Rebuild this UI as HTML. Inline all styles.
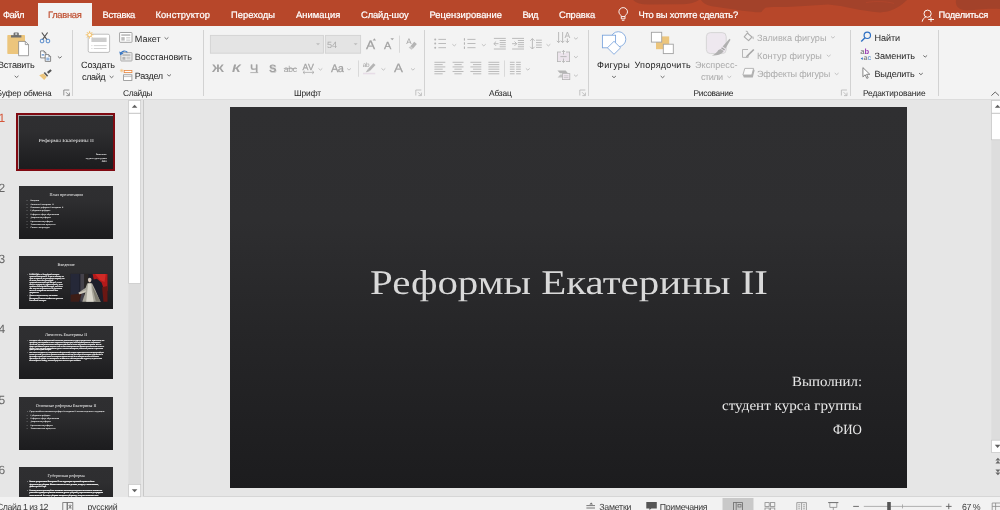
<!DOCTYPE html>
<html lang="ru"><head><meta charset="utf-8"><title>Реформы Екатерины II - PowerPoint</title>
<style>
html,body{margin:0;padding:0}
body{text-rendering:geometricPrecision;width:1000px;height:510px;overflow:hidden;position:relative;background:#e6e6e6;font-family:"Liberation Sans",sans-serif;color:#262626}
.a{position:absolute}
.t{position:absolute;white-space:nowrap;line-height:1;font-family:"Liberation Sans",sans-serif;color:#262626}
.sf{font-family:"Liberation Serif",serif}
#title{left:0;top:0;width:1000px;height:26.4px;background:#b7472a;overflow:hidden}
#tab{left:38px;top:2.7px;width:53.5px;height:24px;background:#f3f3f3}
#ribbon{left:0;top:26.4px;width:1000px;height:72.8px;background:#f3f3f3;box-shadow:0 0.5px 0.6px #dcdcdc}
.gs{position:absolute;top:30px;width:1px;height:66px;background:#d2d2d2}
#panel{left:0;top:100px;width:143px;height:397px;background:#e6e6e6;border-right:1px solid #c8c8c8;overflow:hidden}
#slide{left:230px;top:107px;width:677px;height:380.5px;background:#2b2b2d;background-image:linear-gradient(to bottom,#2f2f31 0%,#2e2e30 30%,#252527 62%,#1c1c1e 100%)}
#status{left:0;top:497.2px;width:1000px;height:14px;background:#f2f2f2}
.sbtn{position:absolute;background:#fff;border:1px solid #d0d0d0;box-sizing:border-box}
.thumb{will-change:transform;position:absolute;left:18.5px;width:94.2px;height:53px;background:#2b2b2d;background-image:linear-gradient(to bottom,#2f2f31 0%,#2e2e30 30%,#252527 62%,#1c1c1e 100%);overflow:hidden}
.ts{position:absolute;left:0;top:0;width:677px;height:381px;transform:scale(0.13915);transform-origin:0 0;font-family:"Liberation Serif",serif;color:#fff}
.tt{position:absolute;left:0;width:677px;text-align:center;white-space:nowrap;line-height:1.24;color:#f0f0f0}
.tx{position:absolute;white-space:nowrap;line-height:1.2;font-weight:bold}
.tp{position:absolute;font-weight:bold;-webkit-text-stroke:1.1px #fff}
.tp p{margin:0 0 0 14px;text-indent:-14px}
.bl{display:inline-block;width:26px;font-size:.7em}
.bl2{display:inline-block;width:14px;text-indent:0;font-size:.7em}
svg{position:absolute;overflow:visible}
</style></head>
<body>
<div id="title" class="a"><svg style="left:0;top:0" width="1000" height="27" viewBox="0 0 1000 27"><path d="M633 0C636 3 641 4.5 648 4.5L684 4.3C690 4 695 2.5 699 0Z" fill="#a3422a"/><path d="M701 0C703 3 706 5 712 6.2C725 8.2 740 10.4 752 11.8C757 12.4 760 12.5 761.5 12C763 10 764 8.4 766 7.4C775 6.6 788 7.4 800 6.2L828 4.4C845 5.6 860 11 880 12.4C890 12 899 8 907 0Z" fill="#a3422a"/><path d="M866 2.6C876 0.8 886 1.4 894 3.4" fill="none" stroke="#b0452b" stroke-width="0.9"/><path d="M956 0C955 5 958 10 966 10.4C975 10.6 985 8 1000 9V0Z" fill="#a3422a"/></svg>
</div>
<div id="tab" class="a"></div>
<div id="ribbon" class="a"></div>
<div class="gs" style="left:72px"></div>
<div class="gs" style="left:203px"></div>
<div class="gs" style="left:424px"></div>
<div class="gs" style="left:588px"></div>
<div class="gs" style="left:850px"></div>
<div class="gs" style="left:938px"></div>
<!-- left thumbnail panel -->
<div id="panel" class="a"></div>
<div class="a" style="left:16px;top:112.6px;width:99.2px;height:58.2px;background:#800a12"></div>
<div class="a" style="left:18.1px;top:114.8px;width:95px;height:53.9px;background:#a9a9ab"></div>
<div class="thumb" style="top:115.6px"><div class="ts"><div class="tx" style="left:139.9px;top:158px;font-size:34.6px;transform:scaleX(1.183);transform-origin:0 0;color:#f0f0f0;font-weight:normal">Реформы Екатерины II</div><div class="tx" style="right:45px;top:267px;font-size:15.5px;text-align:right;line-height:24.3px">Выполнил:<br>студент курса группы<br>ФИО</div></div></div>
<div class="thumb" style="top:185.6px"><div class="ts"><div class="tt" style="top:45.8px;font-size:30.5px">План презентации</div><div class="tx" style="left:56px;top:98px;font-size:15.3px"><span class="bl">▪</span>Введение</div><div class="tx" style="left:56px;top:124px;font-size:15.3px"><span class="bl">▪</span>Личность Екатерины II</div><div class="tx" style="left:56px;top:147px;font-size:15.3px"><span class="bl">▪</span>Основные реформы Екатерины II</div><div class="tx" style="left:56px;top:170px;font-size:15.3px"><span class="bl">▪</span>Губернская реформа</div><div class="tx" style="left:56px;top:196px;font-size:15.3px"><span class="bl">▪</span>Реформа в сфере образования</div><div class="tx" style="left:56px;top:220px;font-size:15.3px"><span class="bl">▪</span>Дворянская реформа</div><div class="tx" style="left:56px;top:243px;font-size:15.3px"><span class="bl">▪</span>Крестьянская реформа</div><div class="tx" style="left:56px;top:265px;font-size:15.3px"><span class="bl">▪</span>Экономические процессы</div><div class="tx" style="left:56px;top:289px;font-size:15.3px"><span class="bl">▪</span>Список литературы</div></div></div>
<div class="thumb" style="top:256.0px"><div class="ts"><div class="tt" style="top:42.9px;font-size:30.5px">Введение</div><div class="tp" style="left:61px;top:125px;width:266px;font-size:12.6px;line-height:14.7px"><p><span class="bl2">▪</span>В 1762-1796 гг. в Российской империи правила Екатерина II. У нее не имелось ни прав на престол, ни российских корней, тем не менее, она стала достойной продолжательницей идей Петра I, и за ее заслуги в народе эту правительницу даже прозвали Екатериной Великой, хотя сама она титулов не принимала. Ее правление вошло в историю как «золотой век» дворянства.</p><p style="margin-top:7px"><span class="bl2">▪</span>Данные свидетельства, что именно Екатерина II внесла наибольшее развитие Российской империи.</p></div><svg style="left:371px;top:129px" width="265" height="199" viewBox="0 0 265 199"><rect width="265" height="199" fill="#1d1e2a"/><rect x="0" y="0" width="62" height="199" fill="#252838"/><rect x="70" y="0" width="28" height="199" fill="#45424a"/><rect x="98" y="0" width="30" height="199" fill="#2a2624"/><path d="M158 0H265V120L240 112 222 62 188 34 166 40Z" fill="#b41a1a"/><path d="M176 0H252L244 58 210 44Z" fill="#d02a26"/><path d="M226 96L265 86V199H236Z" fill="#6a1713"/><path d="M0 150L80 140 60 199H0Z" fill="#3d1d16"/><ellipse cx="137" cy="42" rx="13" ry="14" fill="#c9c5bf"/><ellipse cx="137" cy="50" rx="8.5" ry="10.5" fill="#e3c9b6"/><path d="M119 68Q137 58 155 68L176 112 214 199H84L106 132 62 146 56 136 108 100Z" fill="#a9a69b"/><path d="M126 70L148 70 152 120 166 199H112L120 120Z" fill="#d9d6cb"/><path d="M154 84L196 164 218 199H182Z" fill="#7f7c70"/><path d="M62 146L106 132 112 118 58 136Z" fill="#cfcabd"/></svg></div></div>
<div class="thumb" style="top:326.3px"><div class="ts"><div class="tt" style="top:45.1px;font-size:30.5px">Личность Екатерины II</div><div class="tp" style="left:61px;top:95px;width:556px;font-size:11.6px;line-height:13.9px"><p><span class="bl2">▪</span>Екатерина II была неоднозначной личностью: решительная, мудрая, прогрессивная. Кроме этого, она прекрасно умела оценивать своих подданных. Императрица «коллекционировала» выдающихся личностей, при избрании Великая Екатерина действовала весьма обдуманно и осторожно. Во всех сферах достижения страны только за счет таланта «екатерининских орлов» пришлись очень кстати в состав и духу, как тогда можно было судить о личности Екатерины, насколько успешно и правильно действует на службе империи.</p><p style="margin-top:2px"><span class="bl2">▪</span>Вся жизнь Екатерины II и современных ей правителей, которая перекладывалась императрицей для отзыва для всей думы, была просветительской мыслью. Во дни Петра III Екатерина упражнялась в философии преимущественно на материале просветителей, после которого ее начали называть «философом на троне». Так Екатерина II не обошлась и без «Петровской» мудрости, но достаточно было сохранить свободу, только на разумных началах права человека.</p></div></div></div>
<div class="thumb" style="top:396.7px"><div class="ts"><div class="tt" style="top:45.1px;font-size:30.5px">Основные реформы Екатерины II</div><div class="tx" style="left:60px;top:96.5px;font-size:15.3px"><span class="bl" style="width:15px">▪</span>Среди наиболее значимых реформ Екатерины II можно выделить следующие:</div><div class="tx" style="left:56px;top:123px;font-size:15.3px"><span class="bl">–</span>Губернская реформа</div><div class="tx" style="left:56px;top:146px;font-size:15.3px"><span class="bl">–</span>Реформа в сфере образования</div><div class="tx" style="left:56px;top:170px;font-size:15.3px"><span class="bl">–</span>Дворянская реформа</div><div class="tx" style="left:56px;top:196.5px;font-size:15.3px"><span class="bl">–</span>Крестьянская реформа</div><div class="tx" style="left:56px;top:218px;font-size:15.3px"><span class="bl">–</span>Экономические процессы</div></div></div>
<div class="thumb" style="top:466.9px"><div class="ts"><div class="tt" style="top:46.5px;font-size:30.5px">Губернская реформа</div><div class="tp" style="left:61px;top:98px;width:548px;font-size:13.2px;line-height:17px"><p><span class="bl2">▪</span>Вплоть до правления Екатерины II вся территория огромной страны не была оформлена на губернии. Именно она ввела новое деление, которое, с изменениями, дожило до 1917 года.</p><p style="margin-top:5px"><span class="bl2">▪</span>В основу нового деления была положена численность податного населения: отныне она равнялась примерно трёмстам тысячам душ на губернию, уезды включали до тридцати тысяч жителей. Во главе губернии находился губернатор, которого назначала сама императрица, а каждый уезд возглавлял капитан-исправник.</p></div></div></div>
<!-- main slide -->
<div id="slide" class="a"></div>
<!-- status bar -->
<div class="a" style="left:143px;top:496.2px;width:857px;height:1px;background:#d6d6d6"></div>
<div id="status" class="a"></div>
<svg class="a" style="left:0;top:0" width="1000" height="510" viewBox="0 0 1000 510">
<path d="M621.3 16.6C621.3 14.9 618.9 14.2 618.9 11.9A4.3 4.3 0 0 1 627.5 11.9C627.5 14.2 625 14.9 625 16.6Z" fill="none" stroke="#fff" stroke-width="0.95"/>
<path d="M621.3 16.6V18.8H625V16.6M621.9 20.3H624.4" fill="none" stroke="#fff" stroke-width="0.9"/>
<circle cx="927.6" cy="13.7" r="3.6" fill="none" stroke="#fff" stroke-width="0.95"/>
<path d="M922.2 21.7C922.6 19.2 924.2 17.6 925.8 17" fill="none" stroke="#fff" stroke-width="0.95"/>
<path d="M928.2 19.5H934M931 17.3V21.8" fill="none" stroke="#fff" stroke-width="0.95"/>
<rect x="7.3" y="35" width="17.7" height="19" rx="0.8" fill="#ecc57c"/>
<path d="M11 37.6V35.2H13.6V33.3Q13.6 32.4 14.5 32.4H17.9Q18.8 32.4 18.8 33.3V35.2H21.4V37.6Z" fill="#6f6f6f"/>
<rect x="15.2" y="33.4" width="2" height="1.3" fill="#f3f3f3"/>
<path d="M18.6 41.4H25.3L28.5 44.6V55.7H18.6Z" fill="#fff" stroke="#7c7c7c" stroke-width="0.7"/>
<path d="M25.3 41.4V44.6H28.5" fill="none" stroke="#7c7c7c" stroke-width="0.7"/>
<path d="M14.70 75.85L16.60 77.50L18.50 75.85" fill="none" stroke="#606060" stroke-width="0.9"/>
<path d="M41.8 32.5L46.9 39.6M47.6 32.5L42.5 39.6" stroke="#555" stroke-width="1.15" fill="none"/>
<rect x="40.4" y="39.3" width="3.3" height="3.4" rx="1.1" fill="none" stroke="#3b78c4" stroke-width="1"/><rect x="46.3" y="39.3" width="3.3" height="3.4" rx="1.1" fill="none" stroke="#3b78c4" stroke-width="1"/>
<path d="M40.6 50.9H44L45.9 52.8V57.9H40.6Z" fill="#fff" stroke="#6a6a6a" stroke-width="0.8"/>
<path d="M44 50.9V52.8H45.9" fill="none" stroke="#6a6a6a" stroke-width="0.6"/>
<path d="M45.2 54.6H48.7L50.6 56.5V61.4H45.2Z" fill="#fff" stroke="#6a6a6a" stroke-width="0.8"/>
<path d="M48.7 54.6V56.5H50.6" fill="none" stroke="#6a6a6a" stroke-width="0.6"/>
<path d="M41.7 54.9H44.2" stroke="#3b78c4" stroke-width="1.1"/><path d="M46.3 58.2H49.5M46.3 59.8H49.5" stroke="#3b78c4" stroke-width="0.8"/>
<path d="M57.90 56.45L59.80 58.10L61.70 56.45" fill="none" stroke="#606060" stroke-width="0.9"/>
<path d="M47 72.1L50.4 69.2L51.8 70.8L48.4 73.7Z" fill="#555"/>
<path d="M44.9 72L48.2 75.7L47 76.8L43.7 73.1Z" fill="#555"/>
<path d="M43.6 73.6L46.7 77L44.2 79.9L39.2 75.2Z" fill="#ecc57c"/>
<path d="M63.8 95.5V90H69.3" fill="none" stroke="#7a7a7a" stroke-width="0.8"/>
<path d="M66.0 92.2L69.1 95.3M69.39999999999999 92.6V95.6H66.39999999999999" fill="none" stroke="#7a7a7a" stroke-width="0.8"/>
<rect x="88.2" y="34.2" width="21.4" height="18.2" rx="1.6" fill="#fff" stroke="#bdbdbd" stroke-width="1"/>
<rect x="91.4" y="37.6" width="15.2" height="4.4" fill="#cdcdcd"/>
<path d="M91.4 45.6H92.4M93.8 45.6H106.6M91.4 48.5H92.4M93.8 48.5H106.6" stroke="#cdcdcd" stroke-width="0.9"/>
<g stroke="#f2bd5c" stroke-width="0.8" fill="none"><path d="M89.6 30.9V38.7M85.7 34.8H93.5M86.9 32.1L92.3 37.5M92.3 32.1L86.9 37.5"/></g><circle cx="89.6" cy="34.8" r="1.9" fill="#fffaf0" stroke="#f0b248" stroke-width="0.7"/>
<path d="M109.70 76.05L111.60 77.70L113.50 76.05" fill="none" stroke="#606060" stroke-width="0.9"/>
<rect x="119.6" y="32.5" width="12.4" height="9.8" rx="0.6" fill="#fff" stroke="#8e8e8e" stroke-width="0.8"/>
<rect x="121.3" y="34.2" width="9" height="1.7" fill="#bdbdbd"/><rect x="121.3" y="37.1" width="3.4" height="3.5" fill="#bdbdbd"/><path d="M126.2 37.5H130.3M126.2 39H130.3M126.2 40.4H130.3" stroke="#c4c4c4" stroke-width="0.7"/>
<path d="M164.60 37.45L166.50 39.10L168.40 37.45" fill="none" stroke="#606060" stroke-width="0.9"/>
<rect x="120.8" y="52.6" width="11.2" height="8.4" rx="0.5" fill="#ececec" stroke="#9a9a9a" stroke-width="0.8"/>
<rect x="122.4" y="54.3" width="8" height="1.5" fill="#b4b4b4"/><rect x="122.4" y="56.9" width="3" height="2.8" fill="#b4b4b4"/><path d="M126.6 57.3H130.4M126.6 58.8H130.4" stroke="#b4b4b4" stroke-width="0.7"/>
<path d="M127.4 52.4C125.6 50.3 122.2 50.6 120.9 53.4" fill="none" stroke="#3b78c4" stroke-width="1.2"/><path d="M119.3 51.4L120.1 55.3L123.6 53.6Z" fill="#3b78c4"/>
<rect x="124.2" y="70.4" width="7.7" height="2.2" fill="#fff" stroke="#e8853d" stroke-width="0.8"/>
<path d="M121.7 68.8V72.4M119.9 70.6H123.5M120.5 69.4L122.9 71.8M122.9 69.4L120.5 71.8" stroke="#f3c078" stroke-width="0.6"/>
<rect x="123.6" y="74.8" width="8.3" height="5.6" fill="#fff" stroke="#8e8e8e" stroke-width="0.8"/><path d="M123.6 76.6H131.9" stroke="#a9a9a9" stroke-width="0.7"/>
<path d="M167.20 74.45L169.10 76.10L171.00 74.45" fill="none" stroke="#606060" stroke-width="0.9"/>
<rect x="210.4" y="35.4" width="113" height="17.8" fill="#e4e4e4" stroke="#d2d2d2" stroke-width="0.9"/>
<rect x="325.4" y="35.4" width="35.2" height="17.8" fill="#e4e4e4" stroke="#d2d2d2" stroke-width="0.9"/>
<path d="M316 43.2H320L318 45.3Z" fill="#bdbdbd"/><path d="M353.6 43.2H357.6L355.6 45.3Z" fill="#bdbdbd"/>
<path d="M372.7 40.4L374.4 38.3L376.1 40.4Z" fill="#a4a4a4"/><path d="M390.4 38.2H394L392.2 40.3Z" fill="#a4a4a4"/>
<path d="M399.5 35.6V52.8M358.5 60.4V76.8M504.5 60.4V76.8" stroke="#d6d6d6" stroke-width="0.9"/>
<path d="M410.4 46.2L414.2 41.7L416.9 44L413.1 48.5Z" fill="#b4b4b4"/><path d="M408.7 47.4L410.4 46.2 413.1 48.5 411.4 49.7Z" fill="#c8c8c8"/>
<path d="M250.30 72.60H258.20" stroke="#ababab" stroke-width="0.9" fill="none"/>
<path d="M283.80 68.60H297.00" stroke="#ababab" stroke-width="0.8" fill="none"/>
<path d="M303 72.4H314M303 72.4L304.8 70.9M303 72.4L304.8 73.9M314 72.4L312.2 70.9M314 72.4L312.2 73.9" stroke="#ababab" stroke-width="0.8" fill="none"/>
<path d="M318.50 68.45L320.40 70.10L322.30 68.45" fill="none" stroke="#bcbcbc" stroke-width="0.9"/>
<path d="M347.10 68.45L349.00 70.10L350.90 68.45" fill="none" stroke="#bcbcbc" stroke-width="0.9"/>
<path d="M381.50 68.45L383.40 70.10L385.30 68.45" fill="none" stroke="#bcbcbc" stroke-width="0.9"/>
<path d="M411.00 68.45L412.90 70.10L414.80 68.45" fill="none" stroke="#bcbcbc" stroke-width="0.9"/>
<path d="M367.8 69.2L373.4 63.2L375.5 65.1L369.9 71.1Z" fill="#b4b4b4"/><path d="M365.6 72.6L367.8 69.2 369.9 71.1Z" fill="#b4b4b4"/>
<rect x="363" y="72.8" width="12.2" height="1.5" fill="#e7dde7"/>
<path d="M415.8 95.5V90H421.3" fill="none" stroke="#b5b5b5" stroke-width="0.8"/>
<path d="M418.0 92.2L421.1 95.3M421.40000000000003 92.6V95.6H418.40000000000003" fill="none" stroke="#b5b5b5" stroke-width="0.8"/>
<circle cx="435.2" cy="39.4" r="1" fill="#b4b4b4"/>
<path d="M438.40 39.40H446.00" stroke="#b4b4b4" stroke-width="0.9" fill="none"/>
<path d="M467.40 39.40H475.50" stroke="#b4b4b4" stroke-width="0.9" fill="none"/>
<rect x="463.9" y="38.199999999999996" width="1.1" height="2.4" fill="#b4b4b4"/>
<circle cx="435.2" cy="43.5" r="1" fill="#b4b4b4"/>
<path d="M438.40 43.50H446.00" stroke="#b4b4b4" stroke-width="0.9" fill="none"/>
<path d="M467.40 43.50H475.50" stroke="#b4b4b4" stroke-width="0.9" fill="none"/>
<rect x="463.9" y="42.3" width="1.1" height="2.4" fill="#b4b4b4"/>
<circle cx="435.2" cy="47.7" r="1" fill="#b4b4b4"/>
<path d="M438.40 47.70H446.00" stroke="#b4b4b4" stroke-width="0.9" fill="none"/>
<path d="M467.40 47.70H475.50" stroke="#b4b4b4" stroke-width="0.9" fill="none"/>
<rect x="463.9" y="46.5" width="1.1" height="2.4" fill="#b4b4b4"/>
<path d="M452.40 44.25L454.30 45.90L456.20 44.25" fill="none" stroke="#bcbcbc" stroke-width="0.9"/>
<path d="M481.90 44.25L483.80 45.90L485.70 44.25" fill="none" stroke="#bcbcbc" stroke-width="0.9"/>
<path d="M546.50 44.25L548.40 45.90L550.30 44.25" fill="none" stroke="#bcbcbc" stroke-width="0.9"/>
<path d="M493.90 38.40H505.80" stroke="#b4b4b4" stroke-width="0.9" fill="none"/>
<path d="M493.90 49.00H505.80" stroke="#b4b4b4" stroke-width="0.9" fill="none"/>
<path d="M499.70 40.50H505.80" stroke="#b4b4b4" stroke-width="0.9" fill="none"/>
<path d="M499.70 42.60H505.80" stroke="#b4b4b4" stroke-width="0.9" fill="none"/>
<path d="M499.70 44.70H505.80" stroke="#b4b4b4" stroke-width="0.9" fill="none"/>
<path d="M499.70 46.80H505.80" stroke="#b4b4b4" stroke-width="0.9" fill="none"/>
<path d="M498.5 43.7H493.9M496.09999999999997 41.5L493.9 43.7L496.09999999999997 45.9" stroke="#b4b4b4" stroke-width="0.9" fill="none"/>
<path d="M512.10 38.40H524.00" stroke="#b4b4b4" stroke-width="0.9" fill="none"/>
<path d="M512.10 49.00H524.00" stroke="#b4b4b4" stroke-width="0.9" fill="none"/>
<path d="M517.90 40.50H524.00" stroke="#b4b4b4" stroke-width="0.9" fill="none"/>
<path d="M517.90 42.60H524.00" stroke="#b4b4b4" stroke-width="0.9" fill="none"/>
<path d="M517.90 44.70H524.00" stroke="#b4b4b4" stroke-width="0.9" fill="none"/>
<path d="M517.90 46.80H524.00" stroke="#b4b4b4" stroke-width="0.9" fill="none"/>
<path d="M512.1 43.7H516.7M514.5 41.5L516.7 43.7L514.5 45.9" stroke="#b4b4b4" stroke-width="0.9" fill="none"/>
<path d="M532.4 38.6V49M530.2 40.8L532.4 38.6L534.6 40.8M530.2 46.8L532.4 49L534.6 46.8" stroke="#b4b4b4" stroke-width="0.9" fill="none"/>
<path d="M536.00 40.20H541.80" stroke="#b4b4b4" stroke-width="0.9" fill="none"/>
<path d="M536.00 42.60H541.80" stroke="#b4b4b4" stroke-width="0.9" fill="none"/>
<path d="M536.00 45.00H541.80" stroke="#b4b4b4" stroke-width="0.9" fill="none"/>
<path d="M536.00 47.40H541.80" stroke="#b4b4b4" stroke-width="0.9" fill="none"/>
<path d="M434.40 62.30H445.30" stroke="#b4b4b4" stroke-width="0.9" fill="none"/>
<path d="M452.60 62.30H463.50" stroke="#b4b4b4" stroke-width="0.9" fill="none"/>
<path d="M470.40 62.30H481.30" stroke="#b4b4b4" stroke-width="0.9" fill="none"/>
<path d="M488.40 62.30H499.30" stroke="#b4b4b4" stroke-width="0.9" fill="none"/>
<path d="M509.90 62.30H514.60" stroke="#b4b4b4" stroke-width="0.9" fill="none"/>
<path d="M516.10 62.30H520.80" stroke="#b4b4b4" stroke-width="0.9" fill="none"/>
<path d="M434.40 64.60H442.70" stroke="#b4b4b4" stroke-width="0.9" fill="none"/>
<path d="M454.40 64.60H461.70" stroke="#b4b4b4" stroke-width="0.9" fill="none"/>
<path d="M473.00 64.60H481.30" stroke="#b4b4b4" stroke-width="0.9" fill="none"/>
<path d="M488.40 64.60H499.30" stroke="#b4b4b4" stroke-width="0.9" fill="none"/>
<path d="M509.90 64.60H514.60" stroke="#b4b4b4" stroke-width="0.9" fill="none"/>
<path d="M516.10 64.60H520.80" stroke="#b4b4b4" stroke-width="0.9" fill="none"/>
<path d="M434.40 66.90H445.30" stroke="#b4b4b4" stroke-width="0.9" fill="none"/>
<path d="M452.60 66.90H463.50" stroke="#b4b4b4" stroke-width="0.9" fill="none"/>
<path d="M470.40 66.90H481.30" stroke="#b4b4b4" stroke-width="0.9" fill="none"/>
<path d="M488.40 66.90H499.30" stroke="#b4b4b4" stroke-width="0.9" fill="none"/>
<path d="M509.90 66.90H514.60" stroke="#b4b4b4" stroke-width="0.9" fill="none"/>
<path d="M516.10 66.90H520.80" stroke="#b4b4b4" stroke-width="0.9" fill="none"/>
<path d="M434.40 69.20H442.70" stroke="#b4b4b4" stroke-width="0.9" fill="none"/>
<path d="M454.40 69.20H461.70" stroke="#b4b4b4" stroke-width="0.9" fill="none"/>
<path d="M473.00 69.20H481.30" stroke="#b4b4b4" stroke-width="0.9" fill="none"/>
<path d="M488.40 69.20H499.30" stroke="#b4b4b4" stroke-width="0.9" fill="none"/>
<path d="M509.90 69.20H514.60" stroke="#b4b4b4" stroke-width="0.9" fill="none"/>
<path d="M516.10 69.20H520.80" stroke="#b4b4b4" stroke-width="0.9" fill="none"/>
<path d="M434.40 71.50H445.30" stroke="#b4b4b4" stroke-width="0.9" fill="none"/>
<path d="M452.60 71.50H463.50" stroke="#b4b4b4" stroke-width="0.9" fill="none"/>
<path d="M470.40 71.50H481.30" stroke="#b4b4b4" stroke-width="0.9" fill="none"/>
<path d="M488.40 71.50H499.30" stroke="#b4b4b4" stroke-width="0.9" fill="none"/>
<path d="M509.90 71.50H514.60" stroke="#b4b4b4" stroke-width="0.9" fill="none"/>
<path d="M516.10 71.50H520.80" stroke="#b4b4b4" stroke-width="0.9" fill="none"/>
<path d="M434.40 73.80H442.70" stroke="#b4b4b4" stroke-width="0.9" fill="none"/>
<path d="M454.40 73.80H461.70" stroke="#b4b4b4" stroke-width="0.9" fill="none"/>
<path d="M473.00 73.80H481.30" stroke="#b4b4b4" stroke-width="0.9" fill="none"/>
<path d="M488.40 73.80H499.30" stroke="#b4b4b4" stroke-width="0.9" fill="none"/>
<path d="M509.90 73.80H514.60" stroke="#b4b4b4" stroke-width="0.9" fill="none"/>
<path d="M516.10 73.80H520.80" stroke="#b4b4b4" stroke-width="0.9" fill="none"/>
<path d="M525.90 68.45L527.80 70.10L529.70 68.45" fill="none" stroke="#bcbcbc" stroke-width="0.9"/>
<path d="M558.6 32V42.6M556.8 40.8L558.6 42.6L560.4 40.8M562.6 32V42.6M560.8 40.8L562.6 42.6L564.4 40.8" stroke="#b4b4b4" stroke-width="0.9" fill="none"/>
<path d="M565 38L567.4 32L569.8 38M565.9 36H568.9M567.4 38.5V42.6M565.6 40.8L567.4 42.6L569.2 40.8" stroke="#b4b4b4" stroke-width="0.9" fill="none"/>
<path d="M574.00 37.55L575.90 39.20L577.80 37.55" fill="none" stroke="#bcbcbc" stroke-width="0.9"/>
<rect x="557.4" y="52" width="12.2" height="9.6" fill="#ece4ec" stroke="#b4b4b4" stroke-width="0.8"/>
<rect x="561" y="50" width="5" height="3" fill="#f3f3f3"/><rect x="561" y="60.4" width="5" height="3" fill="#f3f3f3"/>
<path d="M563.5 50.4V54.6M561.9 52L563.5 50.4L565.1 52M563.5 58.6V62.4M561.9 60.8L563.5 62.4L565.1 60.8M560.4 56.6H566.6" stroke="#b4b4b4" stroke-width="0.9" fill="none"/>
<path d="M574.00 56.15L575.90 57.80L577.80 56.15" fill="none" stroke="#bcbcbc" stroke-width="0.9"/>
<path d="M557.4 70.4H565.6L568 73.2H560Z" fill="#b4b4b4"/><path d="M557.6 77.4L560.4 74.4H563V77.4Z" fill="#c4c4c4"/>
<rect x="562.4" y="73.6" width="7.4" height="6" fill="#efe8ef" stroke="#b4b4b4" stroke-width="0.8"/><path d="M563.8 75.8H568.4M563.8 77.6H568.4" stroke="#b4b4b4" stroke-width="0.6"/>
<path d="M574.00 74.75L575.90 76.40L577.80 74.75" fill="none" stroke="#bcbcbc" stroke-width="0.9"/>
<path d="M579.8 95.5V90H585.3" fill="none" stroke="#b5b5b5" stroke-width="0.8"/>
<path d="M582.0 92.2L585.0999999999999 95.3M585.4 92.6V95.6H582.4" fill="none" stroke="#b5b5b5" stroke-width="0.8"/>
<circle cx="618.3" cy="39.2" r="7.5" fill="#fff" stroke="#78a3dc" stroke-width="0.85"/>
<rect x="602.4" y="35.2" width="13.2" height="12.6" fill="#fff" stroke="#78a3dc" stroke-width="0.85"/>
<path d="M614 41.3L620.6 47.8L614 54.3L607.4 47.8Z" fill="#fff" stroke="#78a3dc" stroke-width="0.85"/>
<path d="M612.10 76.05L614.00 77.70L615.90 76.05" fill="none" stroke="#606060" stroke-width="0.9"/>
<rect x="656" y="36.4" width="13.2" height="12.8" fill="#ecc57c"/>
<rect x="651.4" y="32.3" width="10.3" height="9.8" fill="#fff" stroke="#a2a2a2" stroke-width="0.9"/>
<rect x="663.3" y="44.2" width="10" height="9.4" fill="#fff" stroke="#a2a2a2" stroke-width="0.9"/>
<path d="M660.70 76.05L662.60 77.70L664.50 76.05" fill="none" stroke="#606060" stroke-width="0.9"/>
<rect x="706.4" y="32.6" width="19.8" height="21" rx="4" fill="#eee8ef" stroke="#d3d3d3" stroke-width="0.9"/>
<path d="M729.5 38.7L730.5 39.8L725.5 48.5L722.6 46.6Z" fill="#b0b0b0"/>
<path d="M721.9 47.3L725 49.3L724.3 50.4L721.2 48.4Z" fill="#a4a4a4"/>
<path d="M720.7 49L723.8 51C722 54 717.6 55.7 711.9 55.6C714.8 54.2 717.4 51.9 718.4 49.9Z" fill="#b0b0b0"/>
<path d="M727.40 76.05L729.30 77.70L731.20 76.05" fill="none" stroke="#bcbcbc" stroke-width="0.9"/>
<path d="M747.4 33.2L752 37L748.6 40.6L744.2 36.8Z" fill="none" stroke="#ababab" stroke-width="1.1" stroke-linejoin="round"/><path d="M745.8 31.2Q747.8 30.4 748.2 33.8" fill="none" stroke="#ababab" stroke-width="0.9"/><path d="M753 36Q754.4 38.4 753.2 39.4Q751.8 38.4 753 36Z" fill="#ababab"/>
<path d="M748 49.5H742.5V57.4H748.2V55.6" fill="none" stroke="#b0b0b0" stroke-width="0.9"/><path d="M753.2 48.9L754.4 50L747.8 56.6L745.6 57.6L746.6 55.4Z" fill="#a6a6a6"/>
<path d="M744.8 68.4H753.6L751.8 75H742.9Z" fill="#fafafa" stroke="#b0b0b0" stroke-width="0.9"/><path d="M742.9 75H751.8L753.6 68.4L754.6 70.4L752.8 77.6H743.8Z" fill="#b0b0b0"/>
<path d="M831.00 36.45L832.90 38.10L834.80 36.45" fill="none" stroke="#bcbcbc" stroke-width="0.9"/>
<path d="M826.80 54.85L828.70 56.50L830.60 54.85" fill="none" stroke="#bcbcbc" stroke-width="0.9"/>
<path d="M834.80 73.05L836.70 74.70L838.60 73.05" fill="none" stroke="#bcbcbc" stroke-width="0.9"/>
<path d="M841.4 95.5V90H846.9" fill="none" stroke="#b5b5b5" stroke-width="0.8"/>
<path d="M843.6 92.2L846.6999999999999 95.3M847.0 92.6V95.6H844.0" fill="none" stroke="#b5b5b5" stroke-width="0.8"/>
<circle cx="867.3" cy="35.3" r="3.2" fill="none" stroke="#2e6fc2" stroke-width="1.2"/><path d="M865 37.8L861.2 41.4" stroke="#2e6fc2" stroke-width="1.4"/>
<path d="M860.6 58.6L862.8 59.9V57.3Z" fill="#3b78c4"/>
<path d="M862.9 67.6V76.8L865.2 74.8L866.8 78.4L868.2 77.8L866.6 74.3H869.8Z" fill="#fff" stroke="#6a6a6a" stroke-width="0.8"/>
<path d="M923.30 55.45L925.20 57.10L927.10 55.45" fill="none" stroke="#606060" stroke-width="0.9"/>
<path d="M919.00 73.05L920.90 74.70L922.80 73.05" fill="none" stroke="#606060" stroke-width="0.9"/>
<path d="M991.4 95.6L995.2 92L999 95.6" fill="none" stroke="#555" stroke-width="0.9"/>
<rect x="722.5" y="498" width="31" height="12" fill="#c9c9c9"/>
<rect x="62.8" y="502.6" width="4.4" height="8" fill="none" stroke="#6a6a6a" stroke-width="0.8"/><rect x="67.2" y="502.6" width="5.6" height="8" fill="none" stroke="#6a6a6a" stroke-width="0.8"/><path d="M68.6 505L71.6 508.4M71.6 505L68.6 508.4M70.1 504.4V509" stroke="#6a6a6a" stroke-width="0.7"/>
<path d="M589.4 504.4L591.2 502.4L593 504.4Z" fill="#6a6a6a"/><path d="M586.4 505.6H595M586.4 508H595" stroke="#6a6a6a" stroke-width="0.9"/>
<path d="M646.3 502H656.8V508.6H651.4L649.4 510V508.6H646.3Z" fill="#555"/>
<rect x="733.6" y="502.6" width="9" height="8" fill="none" stroke="#6a6a6a" stroke-width="0.8"/><path d="M736.2 502.6V510" stroke="#6a6a6a" stroke-width="0.8"/><rect x="738" y="504.6" width="3" height="2.4" fill="none" stroke="#6a6a6a" stroke-width="0.7"/>
<rect x="765" y="502.6" width="4.2" height="3.8" fill="none" stroke="#8a8a8a" stroke-width="0.8"/>
<rect x="765" y="508.0" width="4.2" height="3.8" fill="none" stroke="#8a8a8a" stroke-width="0.8"/>
<rect x="770.6" y="502.6" width="4.2" height="3.8" fill="none" stroke="#8a8a8a" stroke-width="0.8"/>
<rect x="770.6" y="508.0" width="4.2" height="3.8" fill="none" stroke="#8a8a8a" stroke-width="0.8"/>
<path d="M796.8 502.6H801.6V510M806.4 510V502.6H801.6M796.8 502.6V510" fill="none" stroke="#8a8a8a" stroke-width="0.8"/><path d="M798.2 504.8H800.2M798.2 506.8H800.2M803 504.8H805M803 506.8H805M798.2 508.8H800.2M803 508.8H805" stroke="#8a8a8a" stroke-width="0.7"/>
<path d="M828.2 502.6H838.4" stroke="#6a6a6a" stroke-width="1"/><path d="M829.8 503V507.4H836.8V503M833.3 507.4V510" fill="none" stroke="#8a8a8a" stroke-width="0.8"/>
<path d="M853.2 506.4H858.9M945.9 506.4H951.6M948.75 503.6V509.2" stroke="#5e5e5e" stroke-width="0.9"/>
<path d="M863.8 506.4H941.6" stroke="#a0a0a0" stroke-width="0.8"/><path d="M902.5 504.4V508.4" stroke="#a0a0a0" stroke-width="0.8"/>
<rect x="887.2" y="502" width="3.6" height="9" fill="#555"/>
<path d="M992.2 510V503H1000M995.6 503V510M992.2 506.4H1000" fill="none" stroke="#8a8a8a" stroke-width="0.8"/>
<rect x="128.4" y="100" width="12.6" height="397" fill="#dddddd"/>
<rect x="128.7" y="100.4" width="12" height="183" fill="#fff" stroke="#c6c6c6" stroke-width="0.7"/>
<path d="M128.7 113.3H140.7" stroke="#b4b4b4" stroke-width="0.8"/>
<path d="M131.8 107.8L134.6 104.7L137.4 107.8Z" fill="#606060"/>
<rect x="128.7" y="484.4" width="12" height="12.4" fill="#fff" stroke="#c6c6c6" stroke-width="0.7"/><path d="M131.8 489.2L134.6 492.3L137.4 489.2Z" fill="#606060"/>
<rect x="991.3" y="100" width="9" height="352.6" fill="#dddddd"/>
<rect x="991.6" y="100.4" width="10" height="39.4" fill="#fff" stroke="#c6c6c6" stroke-width="0.7"/>
<path d="M991.6 113.3H1001" stroke="#b4b4b4" stroke-width="0.8"/>
<path d="M994.8 107.8L997.6 104.7L1000.4 107.8Z" fill="#606060"/>
<rect x="991.6" y="440.2" width="10" height="12.2" fill="#fff" stroke="#c6c6c6" stroke-width="0.7"/><path d="M994.8 444.8L997.6 447.9L1000.4 444.8Z" fill="#606060"/>
<path d="M995.4 460.4L997.9 457.8L1000.4 460.4ZM995.4 463.4L997.9 460.8L1000.4 463.4Z" fill="#666"/><path d="M995.4 469.6L997.9 472.2L1000.4 469.6ZM995.4 472.6L997.9 475.2L1000.4 472.6Z" fill="#666"/>
</svg>
<div id="txt" class="a" style="left:0;top:0;width:1000px;height:510px;will-change:transform">
<span class="t" style="left:3.00px;top:11.00px;font-size:9.35px;letter-spacing:-0.496px;color:#ffffff;-webkit-text-stroke:0.22px;">Файл</span>
<span class="t" style="left:48.00px;top:11.00px;font-size:9.35px;letter-spacing:-0.311px;color:#bf4f31;-webkit-text-stroke:0.22px;">Главная</span>
<span class="t" style="left:102.50px;top:11.00px;font-size:9.35px;letter-spacing:-0.319px;color:#ffffff;-webkit-text-stroke:0.22px;">Вставка</span>
<span class="t" style="left:155.50px;top:11.00px;font-size:9.35px;letter-spacing:0.111px;color:#ffffff;-webkit-text-stroke:0.22px;">Конструктор</span>
<span class="t" style="left:231.00px;top:11.00px;font-size:9.35px;letter-spacing:0.021px;color:#ffffff;-webkit-text-stroke:0.22px;">Переходы</span>
<span class="t" style="left:296.00px;top:11.00px;font-size:9.35px;letter-spacing:0.078px;color:#ffffff;-webkit-text-stroke:0.22px;">Анимация</span>
<span class="t" style="left:361.00px;top:11.00px;font-size:9.35px;letter-spacing:-0.106px;color:#ffffff;-webkit-text-stroke:0.22px;">Слайд-шоу</span>
<span class="t" style="left:429.50px;top:11.00px;font-size:9.35px;letter-spacing:0.025px;color:#ffffff;-webkit-text-stroke:0.22px;">Рецензирование</span>
<span class="t" style="left:522.50px;top:11.00px;font-size:9.35px;letter-spacing:-0.469px;color:#ffffff;-webkit-text-stroke:0.22px;">Вид</span>
<span class="t" style="left:559.00px;top:11.00px;font-size:9.35px;letter-spacing:-0.094px;color:#ffffff;-webkit-text-stroke:0.22px;">Справка</span>
<span class="t" style="left:638.50px;top:11.00px;font-size:9.35px;letter-spacing:-0.173px;color:#ffffff;-webkit-text-stroke:0.22px;">Что вы хотите сделать?</span>
<span class="t" style="left:938.50px;top:11.00px;font-size:9.35px;letter-spacing:-0.211px;color:#ffffff;-webkit-text-stroke:0.22px;">Поделиться</span>
<span class="t" style="left:-2.00px;top:61.00px;font-size:9.1px;letter-spacing:-0.256px;">Вставить</span>
<span class="t" style="left:-3.50px;top:89.00px;font-size:8.4px;letter-spacing:-0.160px;">Буфер обмена</span>
<span class="t" style="left:81.00px;top:61.00px;font-size:9.1px;letter-spacing:-0.080px;">Создать</span>
<span class="t" style="left:82.00px;top:73.00px;font-size:9.1px;letter-spacing:-0.419px;">слайд</span>
<span class="t" style="left:134.80px;top:35.00px;font-size:9.1px;letter-spacing:0.050px;">Макет</span>
<span class="t" style="left:134.80px;top:53.00px;font-size:9.1px;letter-spacing:-0.103px;">Восстановить</span>
<span class="t" style="left:134.80px;top:71.60px;font-size:9.1px;letter-spacing:-0.344px;">Раздел</span>
<span class="t" style="left:123.00px;top:89.00px;font-size:8.4px;letter-spacing:-0.331px;">Слайды</span>
<span class="t" style="left:327.00px;top:41.00px;font-size:9.1px;letter-spacing:-0.062px;color:#ababab;">54</span>
<span class="t" style="left:294.00px;top:89.00px;font-size:8.4px;letter-spacing:-0.113px;">Шрифт</span>
<span class="t" style="left:489.00px;top:89.00px;font-size:8.4px;letter-spacing:-0.200px;">Абзац</span>
<span class="t" style="left:597.00px;top:61.00px;font-size:9.1px;letter-spacing:0.273px;">Фигуры</span>
<span class="t" style="left:634.50px;top:61.00px;font-size:9.1px;letter-spacing:0.216px;">Упорядочить</span>
<span class="t" style="left:695.00px;top:61.00px;font-size:9.1px;letter-spacing:0.019px;color:#ababab;">Экспресс-</span>
<span class="t" style="left:701.00px;top:73.00px;font-size:9.1px;letter-spacing:-0.537px;color:#ababab;">стили</span>
<span class="t" style="left:757.00px;top:34.00px;font-size:9.1px;color:#ababab;">Заливка фигуры</span>
<span class="t" style="left:757.00px;top:52.00px;font-size:9.1px;letter-spacing:0.108px;color:#ababab;">Контур фигуры</span>
<span class="t" style="left:757.00px;top:70.00px;font-size:9.1px;letter-spacing:-0.200px;color:#ababab;">Эффекты фигуры</span>
<span class="t" style="left:693.50px;top:89.00px;font-size:8.4px;letter-spacing:-0.299px;">Рисование</span>
<span class="t" style="left:874.50px;top:34.00px;font-size:9.1px;letter-spacing:-0.091px;">Найти</span>
<span class="t" style="left:874.50px;top:52.00px;font-size:9.1px;letter-spacing:-0.047px;">Заменить</span>
<span class="t" style="left:874.50px;top:70.00px;font-size:9.1px;letter-spacing:-0.244px;">Выделить</span>
<span class="t" style="left:863.00px;top:89.00px;font-size:8.4px;letter-spacing:-0.094px;">Редактирование</span>
<span class="t" style="left:-3.00px;top:503.00px;font-size:8.8px;letter-spacing:-0.492px;color:#3b3b3b;">Слайд 1 из 12</span>
<span class="t" style="left:87.50px;top:503.00px;font-size:8.8px;letter-spacing:-0.225px;color:#3b3b3b;">русский</span>
<span class="t" style="left:599.20px;top:503.00px;font-size:8.8px;letter-spacing:-0.237px;color:#3b3b3b;">Заметки</span>
<span class="t" style="left:659.80px;top:503.00px;font-size:8.8px;letter-spacing:-0.330px;color:#3b3b3b;">Примечания</span>
<span class="t" style="left:962.00px;top:503.00px;font-size:8.8px;letter-spacing:-0.516px;color:#3b3b3b;">67 %</span>
<span class="t" style="left:-1.40px;top:112.00px;font-size:12px;color:#d5573a;">1</span>
<span class="t" style="left:-1.40px;top:182.00px;font-size:12px;color:#666666;">2</span>
<span class="t" style="left:-1.40px;top:253.00px;font-size:12px;color:#666666;">3</span>
<span class="t" style="left:-1.40px;top:323.00px;font-size:12px;color:#666666;">4</span>
<span class="t" style="left:-1.40px;top:394.00px;font-size:12px;color:#666666;">5</span>
<span class="t" style="left:-1.40px;top:464.00px;font-size:12px;color:#666666;">6</span>
<span class="t sf" style="left:369.90px;top:266.00px;font-size:34.6px;color:#d9d9d9;transform:scaleX(1.1835);transform-origin:0 0;">Реформы Екатерины II</span>
<span class="t sf" style="left:791.60px;top:376.00px;font-size:14px;color:#e8e8e8;transform:scaleX(1.0636);transform-origin:0 0;">Выполнил:</span>
<span class="t sf" style="left:722.00px;top:400.00px;font-size:14px;color:#e8e8e8;transform:scaleX(1.0798);transform-origin:0 0;">студент курса группы</span>
<span class="t sf" style="left:832.90px;top:424.00px;font-size:14px;color:#e8e8e8;transform:scaleX(0.9207);transform-origin:0 0;">ФИО</span>
<span class="t" style="left:212.30px;top:64.00px;font-size:10.8px;color:#a2a2a2;transform:scaleX(1.2186);transform-origin:0 0;font-weight:bold;">Ж</span>
<span class="t" style="left:231.80px;top:64.00px;font-size:10.8px;color:#a2a2a2;transform:scaleX(1.2951);transform-origin:0 0;font-weight:bold;font-style:italic;">К</span>
<span class="t" style="left:250.00px;top:64.00px;font-size:10.8px;color:#a2a2a2;transform:scaleX(1.1384);transform-origin:0 0;-webkit-text-stroke:0.3px;">Ч</span>
<span class="t" style="left:268.60px;top:64.00px;font-size:10.8px;color:#a2a2a2;transform:scaleX(1.0412);transform-origin:0 0;font-weight:bold;text-shadow:0.6px 0.6px 0 #d0d0d0;">S</span>
<span class="t" style="left:283.80px;top:65.00px;font-size:8.6px;letter-spacing:-0.353px;color:#a2a2a2;">abc</span>
<span class="t" style="left:302.60px;top:63.00px;font-size:8.8px;letter-spacing:0.153px;color:#a2a2a2;-webkit-text-stroke:0.25px;">AV</span>
<span class="t" style="left:331.00px;top:64.00px;font-size:11px;letter-spacing:-0.534px;color:#a2a2a2;-webkit-text-stroke:0.25px;">Aa</span>
<span class="t" style="left:394.10px;top:62.00px;font-size:12px;color:#a2a2a2;transform:scaleX(1.1103);transform-origin:0 0;-webkit-text-stroke:0.25px;">A</span>
<span class="t" style="left:365.50px;top:39.00px;font-size:12.2px;color:#a2a2a2;transform:scaleX(1.1179);transform-origin:0 0;-webkit-text-stroke:0.25px;">A</span>
<span class="t" style="left:383.70px;top:42.00px;font-size:10.2px;color:#a2a2a2;transform:scaleX(1.0740);transform-origin:0 0;-webkit-text-stroke:0.25px;">A</span>
<span class="t" style="left:406.20px;top:38.00px;font-size:8px;letter-spacing:0.056px;color:#a2a2a2;">A</span>
<span class="t" style="left:362.80px;top:63.00px;font-size:6.4px;letter-spacing:-0.255px;color:#a2a2a2;">ab</span>
<span class="t" style="left:860.20px;top:48.00px;font-size:7.6px;letter-spacing:-0.234px;color:#6a6a6a;">a</span>
<span class="t" style="left:864.40px;top:48.00px;font-size:7.6px;letter-spacing:-0.441px;color:#9b3fb5;font-weight:bold;">b</span>
<span class="t" style="left:863.60px;top:55.00px;font-size:7px;letter-spacing:-0.106px;color:#6a6a6a;">a</span>
<span class="t" style="left:867.60px;top:55.00px;font-size:7px;letter-spacing:0.300px;color:#3b78c4;">c</span>
</div>
</body></html>
